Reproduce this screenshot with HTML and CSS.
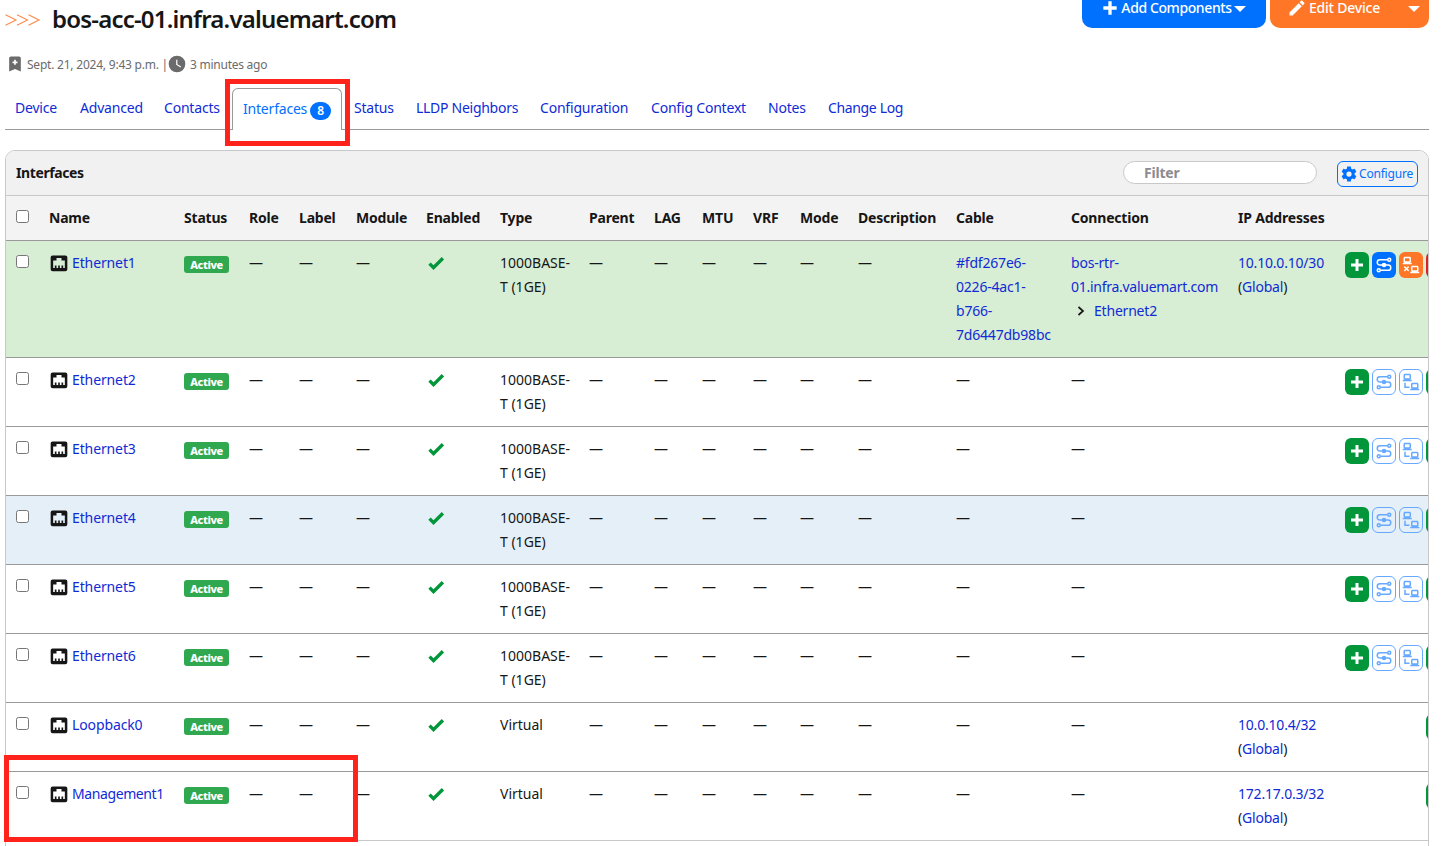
FILE: index.html
```html
<!DOCTYPE html>
<html lang="en">
<head>
<meta charset="utf-8">
<title>bos-acc-01.infra.valuemart.com - Interfaces</title>
<link rel="stylesheet" href="styles.css">
</head>
<body>
<svg class="sprite" aria-hidden="true">
<symbol id="ethernet" viewBox="0 0 24 24"><path d="M7,15H9V18H11V15H13V18H15V15H17V18H19V9H15V6H9V9H5V18H7V15M4.38,3H19.63C20.94,3 22,4.06 22,5.38V19.63A2.37,2.37 0 0,1 19.63,22H4.38C3.06,22 2,20.94 2,19.63V5.38C2,4.06 3.06,3 4.38,3Z"/></symbol>
<symbol id="check" viewBox="0 0 24 24"><path d="M9,20.42L2.79,14.21L5.62,11.38L9,14.77L18.88,4.88L21.71,7.71L9,20.42Z"/></symbol>
<symbol id="plus" viewBox="0 0 24 24"><path d="M20 14H14V20H10V14H4V10H10V4H14V10H20V14Z"/></symbol>
<symbol id="pencil" viewBox="0 0 24 24"><path d="M20.71,7.04C21.1,6.65 21.1,6 20.71,5.63L18.37,3.29C18,2.9 17.35,2.9 16.96,3.29L15.12,5.12L18.87,8.87M3,17.25V21H6.75L17.81,9.93L14.06,6.18L3,17.25Z"/></symbol>
<symbol id="clock" viewBox="0 0 24 24"><path d="M12,2A10,10 0 0,0 2,12A10,10 0 0,0 12,22A10,10 0 0,0 22,12A10,10 0 0,0 12,2M16.2,16.2L11,13V7H12.5V12.2L17,14.9L16.2,16.2Z"/></symbol>
<symbol id="bookmark" viewBox="0 0 24 24"><path d="M17,3A2,2 0 0,1 19,5V21L12,18L5,21V5C5,3.89 5.9,3 7,3H17M11,7V9H9V11H11V13H13V11H15V9H13V7H11Z"/></symbol>
<symbol id="cog" viewBox="0 0 24 24"><path d="M12,15.5A3.5,3.5 0 0,1 8.5,12A3.5,3.5 0 0,1 12,8.5A3.5,3.5 0 0,1 15.5,12A3.5,3.5 0 0,1 12,15.5M19.43,12.97C19.47,12.65 19.5,12.33 19.5,12C19.5,11.67 19.47,11.34 19.43,11L21.54,9.37C21.73,9.22 21.78,8.95 21.66,8.73L19.66,5.27C19.54,5.05 19.27,4.96 19.05,5.05L16.56,6.05C16.04,5.66 15.5,5.32 14.87,5.07L14.5,2.42C14.46,2.18 14.25,2 14,2H10C9.75,2 9.54,2.18 9.5,2.42L9.13,5.07C8.5,5.32 7.96,5.66 7.44,6.05L4.95,5.05C4.73,4.96 4.46,5.05 4.34,5.27L2.34,8.73C2.21,8.95 2.27,9.22 2.46,9.37L4.57,11C4.53,11.34 4.5,11.67 4.5,12C4.5,12.33 4.53,12.65 4.57,12.97L2.46,14.63C2.27,14.78 2.21,15.05 2.34,15.27L4.34,18.73C4.46,18.95 4.73,19.03 4.95,18.95L7.44,17.94C7.96,18.34 8.5,18.68 9.13,18.93L9.5,21.58C9.54,21.82 9.75,22 10,22H14C14.25,22 14.46,21.82 14.5,21.58L14.87,18.93C15.5,18.67 16.04,18.34 16.56,17.94L19.05,18.95C19.27,19.03 19.54,18.95 19.66,18.73L21.66,15.27C21.78,15.05 21.73,14.78 21.54,14.63L19.43,12.97Z"/></symbol>
<symbol id="transit" viewBox="0 0 24 24"><g fill="none" stroke="currentColor" stroke-width="2"><circle cx="19" cy="5" r="2"/><circle cx="5" cy="19" r="2"/><path d="M17 5H6.500A3.500 3.500 0 0 0 6.500 12H17.500A3.500 3.500 0 0 1 17.500 19H7"/></g><circle cx="12" cy="12" r="3"/></symbol>
<symbol id="lan" viewBox="0 0 24 24"><path d="M4,1C2.890,1 2,1.890 2,3V7C2,8.110 2.890,9 4,9H1V11H13V9H10C11.110,9 12,8.110 12,7V3C12,1.890 11.110,1 10,1H4M4,3H10V7H4V3M3,13V20H10V18H5V13H3M14,13C12.890,13 12,13.890 12,15V19C12,20.110 12.890,21 14,21H11V23H23V21H20C21.110,21 22,20.110 22,19V15C22,13.890 21.110,13 20,13H14M14,15H20V19H14V15Z"/></symbol>
<symbol id="lan-off" viewBox="0 0 24 24"><path d="M4,1C2.890,1 2,1.890 2,3V7C2,8.110 2.890,9 4,9H1V11H13V9H10C11.110,9 12,8.110 12,7V3C12,1.890 11.110,1 10,1H4M4,3H10V7H4V3M14,13C12.890,13 12,13.890 12,15V19C12,20.110 12.890,21 14,21H11V23H23V21H20C21.110,21 22,20.110 22,19V15C22,13.890 21.110,13 20,13H14M3.880,13.460L2.460,14.880L4.590,17L2.460,19.120L3.880,20.540L6,18.410L8.120,20.540L9.540,19.120L7.410,17L9.540,14.880L8.120,13.460L6,15.590L3.880,13.460M14,15H20V19H14V15Z"/></symbol>
</svg>
<main class="page">
<header class="page-header">
<svg class="chevrons" viewBox="0 0 36 12"><path d="M.5 .8L11 6L.5 11.200M12 .8L22.500 6L12 11.200M23.500 .8L34 6L23.500 11.200"/></svg>
<h1>bos-acc-01.infra.valuemart.com</h1>
<div class="header-actions">
<button class="btn-top add"><svg class="ic"><use href="#plus"/></svg><span>Add Components</span><i class="caret"></i></button>
<button class="btn-top edit"><svg class="ic"><use href="#pencil"/></svg><span>Edit Device</span><i class="caret"></i></button>
</div>
</header>
<div class="meta"><svg class="ic bm"><use href="#bookmark"/></svg><span class="when">Sept. 21, 2024, 9:43 p.m. |</span><svg class="ic ck"><use href="#clock"/></svg><span>3 minutes ago</span></div>
<nav class="tabs">
<a>Device</a><a>Advanced</a><a>Contacts</a><a class="active">Interfaces<span class="badge">8</span></a><a>Status</a><a>LLDP Neighbors</a><a>Configuration</a><a>Config Context</a><a>Notes</a><a>Change Log</a>
</nav>
<section class="panel">
<div class="panel-head"><strong>Interfaces</strong><input class="filter" placeholder="Filter"><button class="configure"><svg class="ic"><use href="#cog"/></svg><span>Configure</span></button></div>
<table>
<colgroup><col class="c-check"><col class="c-name"><col class="c-status"><col class="c-role"><col class="c-label"><col class="c-module"><col class="c-enabled"><col class="c-type"><col class="c-parent"><col class="c-lag"><col class="c-mtu"><col class="c-vrf"><col class="c-mode"><col class="c-desc"><col class="c-cable"><col class="c-conn"><col class="c-ip"><col class="c-act"></colgroup>
<thead><tr><th><input type="checkbox"></th><th>Name</th><th>Status</th><th>Role</th><th>Label</th><th>Module</th><th>Enabled</th><th>Type</th><th>Parent</th><th>LAG</th><th>MTU</th><th>VRF</th><th>Mode</th><th>Description</th><th>Cable</th><th>Connection</th><th>IP Addresses</th><th></th></tr></thead>
<tbody>
<tr class="connected"><td><input type="checkbox"></td><td><div class="name"><svg class="ic"><use href="#ethernet"/></svg><a>Ethernet1</a></div></td><td><span class="label">Active</span></td><td>—</td><td>—</td><td>—</td><td><svg class="ic yes"><use href="#check"/></svg></td><td class="type">1000BASE-<br>T (1GE)</td><td>—</td><td>—</td><td>—</td><td>—</td><td>—</td><td>—</td><td><a>#fdf267e6-<br>0226-4ac1-<br>b766-<br>7d6447db98bc</a></td><td><a>bos-rtr-<br><span class="host">01.infra.valuemart.com</span></a><br><svg class="arrow" viewBox="0 0 8 10"><path d="M1.500 1L6 5L1.500 9"/></svg><a>Ethernet2</a></td><td><a>10.10.0.10/30</a><br>(<a>Global</a>)</td><td><div class="acts"><b class="act green"><svg class="ic"><use href="#plus"/></svg></b><b class="act blue"><svg class="ic"><use href="#transit"/></svg></b><b class="act orange"><svg class="ic"><use href="#lan-off"/></svg></b><b class="act red"></b></div></td></tr>
<tr><td><input type="checkbox"></td><td><div class="name"><svg class="ic"><use href="#ethernet"/></svg><a>Ethernet2</a></div></td><td><span class="label">Active</span></td><td>—</td><td>—</td><td>—</td><td><svg class="ic yes"><use href="#check"/></svg></td><td class="type">1000BASE-<br>T (1GE)</td><td>—</td><td>—</td><td>—</td><td>—</td><td>—</td><td>—</td><td>—</td><td>—</td><td></td><td><div class="acts"><b class="act green"><svg class="ic"><use href="#plus"/></svg></b><b class="act off"><svg class="ic"><use href="#transit"/></svg></b><b class="act off"><svg class="ic"><use href="#lan"/></svg></b><b class="act green"></b></div></td></tr>
<tr><td><input type="checkbox"></td><td><div class="name"><svg class="ic"><use href="#ethernet"/></svg><a>Ethernet3</a></div></td><td><span class="label">Active</span></td><td>—</td><td>—</td><td>—</td><td><svg class="ic yes"><use href="#check"/></svg></td><td class="type">1000BASE-<br>T (1GE)</td><td>—</td><td>—</td><td>—</td><td>—</td><td>—</td><td>—</td><td>—</td><td>—</td><td></td><td><div class="acts"><b class="act green"><svg class="ic"><use href="#plus"/></svg></b><b class="act off"><svg class="ic"><use href="#transit"/></svg></b><b class="act off"><svg class="ic"><use href="#lan"/></svg></b><b class="act green"></b></div></td></tr>
<tr class="hovered"><td><input type="checkbox"></td><td><div class="name"><svg class="ic"><use href="#ethernet"/></svg><a>Ethernet4</a></div></td><td><span class="label">Active</span></td><td>—</td><td>—</td><td>—</td><td><svg class="ic yes"><use href="#check"/></svg></td><td class="type">1000BASE-<br>T (1GE)</td><td>—</td><td>—</td><td>—</td><td>—</td><td>—</td><td>—</td><td>—</td><td>—</td><td></td><td><div class="acts"><b class="act green"><svg class="ic"><use href="#plus"/></svg></b><b class="act off"><svg class="ic"><use href="#transit"/></svg></b><b class="act off"><svg class="ic"><use href="#lan"/></svg></b><b class="act green"></b></div></td></tr>
<tr><td><input type="checkbox"></td><td><div class="name"><svg class="ic"><use href="#ethernet"/></svg><a>Ethernet5</a></div></td><td><span class="label">Active</span></td><td>—</td><td>—</td><td>—</td><td><svg class="ic yes"><use href="#check"/></svg></td><td class="type">1000BASE-<br>T (1GE)</td><td>—</td><td>—</td><td>—</td><td>—</td><td>—</td><td>—</td><td>—</td><td>—</td><td></td><td><div class="acts"><b class="act green"><svg class="ic"><use href="#plus"/></svg></b><b class="act off"><svg class="ic"><use href="#transit"/></svg></b><b class="act off"><svg class="ic"><use href="#lan"/></svg></b><b class="act green"></b></div></td></tr>
<tr><td><input type="checkbox"></td><td><div class="name"><svg class="ic"><use href="#ethernet"/></svg><a>Ethernet6</a></div></td><td><span class="label">Active</span></td><td>—</td><td>—</td><td>—</td><td><svg class="ic yes"><use href="#check"/></svg></td><td class="type">1000BASE-<br>T (1GE)</td><td>—</td><td>—</td><td>—</td><td>—</td><td>—</td><td>—</td><td>—</td><td>—</td><td></td><td><div class="acts"><b class="act green"><svg class="ic"><use href="#plus"/></svg></b><b class="act off"><svg class="ic"><use href="#transit"/></svg></b><b class="act off"><svg class="ic"><use href="#lan"/></svg></b><b class="act green"></b></div></td></tr>
<tr><td><input type="checkbox"></td><td><div class="name"><svg class="ic"><use href="#ethernet"/></svg><a>Loopback0</a></div></td><td><span class="label">Active</span></td><td>—</td><td>—</td><td>—</td><td><svg class="ic yes"><use href="#check"/></svg></td><td class="type">Virtual</td><td>—</td><td>—</td><td>—</td><td>—</td><td>—</td><td>—</td><td>—</td><td>—</td><td><a>10.0.10.4/32</a><br>(<a>Global</a>)</td><td><div class="acts last"><b class="act green"></b></div></td></tr>
<tr><td><input type="checkbox"></td><td><div class="name"><svg class="ic"><use href="#ethernet"/></svg><a class="long">Management1</a></div></td><td><span class="label">Active</span></td><td>—</td><td>—</td><td>—</td><td><svg class="ic yes"><use href="#check"/></svg></td><td class="type">Virtual</td><td>—</td><td>—</td><td>—</td><td>—</td><td>—</td><td>—</td><td>—</td><td>—</td><td><a>172.17.0.3/32</a><br>(<a>Global</a>)</td><td><div class="acts last"><b class="act green"></b></div></td></tr>
</tbody>
</table>
</section>
</main>
<div class="mark mark-tab"></div>
<div class="mark mark-row"></div>
</body>
</html>
```
FILE: styles.css
```css
* { box-sizing: border-box; }
body { margin: 0; height: 846px; overflow: hidden; position: relative; background: #fff; color: #161616; font: 14px/24px "Noto Sans", "Open Sans", sans-serif; letter-spacing: -0.2px; }
button, input { font-family: inherit; letter-spacing: inherit; }
.sprite { position: absolute; width: 0; height: 0; }
.ic { display: block; flex: none; width: 20px; height: 20px; fill: currentColor; }
a { color: #0f2bd6; }
.page { width: 1424px; margin-left: 5px; }

.page-header { display: flex; align-items: flex-start; height: 54px; }
.chevrons { flex: none; width: 36px; height: 12px; margin-top: 14px; fill: none; stroke: #ff8a45; stroke-width: 1.1; }
h1 { margin: 3px 0 0 11px; font-size: 24px; line-height: 32px; font-weight: 600; letter-spacing: -0.79px; white-space: nowrap; }
.header-actions { display: flex; gap: 4px; margin-left: auto; }
.btn-top { display: flex; align-items: center; height: 28px; border: 0; border-radius: 0 0 10px 10px; padding: 0 0 12px; color: #fff; font-size: 14px; line-height: 16px; font-weight: 500; white-space: nowrap; }
.btn-top span { flex: none; }
.add { width: 184px; background: #0070ff; padding-left: 18px; letter-spacing: -0.4px; }
.add span { width: 111px; margin-left: 1px; }
.edit { width: 159px; background: #ff7626; padding-left: 17px; }
.edit span { width: 73px; margin-left: 1px; }
.edit .caret { margin-left: 27px; }
.caret { width: 0; height: 0; margin: 2px 0 0 2px; border: 6px solid transparent; border-top-color: #fff; border-bottom: 0; }

.meta { display: flex; align-items: center; height: 20px; padding-top: 2px; font-size: 12px; line-height: 20px; color: #6b6b6b; letter-spacing: -0.25px; white-space: nowrap; }
.meta .bm { margin-top: -3px; }
.when { width: 140px; margin-left: 2px; letter-spacing: -0.22px; }
.meta .ck { margin: -3px 3px 0 0; }

.tabs { display: flex; height: 56px; padding-top: 14px; border-bottom: 1px solid #9a9a9a; }
.tabs a { flex: none; height: 41px; padding: 8px 0 0 10px; line-height: 24px; white-space: nowrap; }
.tabs a:nth-child(1) { width: 65px; }
.tabs a:nth-child(2) { width: 84px; }
.tabs a:nth-child(3) { width: 78px; }
.tabs a:nth-child(5) { width: 62px; margin-left: 2px; }
.tabs a:nth-child(6) { width: 124px; letter-spacing: -0.28px; }
.tabs a:nth-child(7) { width: 111px; }
.tabs a:nth-child(8) { width: 117px; }
.tabs a:nth-child(9) { width: 60px; }
.tabs a:nth-child(10) { letter-spacing: -0.35px; }
.tabs a.active { display: flex; width: 110px; height: 42px; border: 1px solid #9a9a9a; border-bottom: 0; border-radius: 6px 6px 0 0; background: #fff; color: #0070ff; }
.badge { width: 21px; height: 18px; margin: 5px 0 0 3px; border-radius: 9px; background: #0070ff; color: #fff; font-size: 12px; line-height: 18px; font-weight: 600; text-align: center; }

.panel { height: 710px; margin-top: 20px; border: 1px solid #c8c8c8; border-radius: 10px 10px 0 0; overflow: hidden; }
.panel-head { display: flex; height: 45px; padding: 10px; background: #f1f1f1; border-bottom: 1px solid #c8c8c8; }
.panel-head strong { line-height: 24px; letter-spacing: -0.4px; }
.filter { width: 194px; height: 23px; margin: 0 0 0 auto; padding: 0 20px; border: 1px solid #c8c8c8; border-radius: 12px; background: #fff; font-size: 14px; font-weight: 700; }
.filter::placeholder { color: #8c8c90; opacity: 1; }
.configure { display: flex; align-items: center; width: 81px; height: 26px; margin: 0 0 0 20px; padding: 0 0 0 2px; border: 1px solid #0070ff; border-radius: 6px; background: transparent; color: #0070ff; font-size: 12px; }
.configure .ic { width: 18px; height: 18px; margin-right: 1px; }
.configure span { margin-top: -1px; }

table { width: 1520px; table-layout: fixed; border-spacing: 0; }
.c-check { width: 33px; } .c-name { width: 135px; } .c-status { width: 65px; }
.c-role { width: 50px; } .c-label { width: 57px; } .c-module { width: 70px; }
.c-enabled { width: 74px; } .c-type { width: 89px; } .c-parent { width: 65px; }
.c-lag { width: 48px; } .c-mtu { width: 51px; } .c-vrf { width: 47px; }
.c-mode { width: 58px; } .c-desc { width: 98px; } .c-cable { width: 115px; }
.c-conn { width: 167px; } .c-ip { width: 107px; } .c-act { width: 191px; }
th, td { padding: 10px 0 10px 10px; border-bottom: 1px solid #9a9a9a; text-align: left; vertical-align: top; white-space: nowrap; }
th { height: 45px; background: #f3f3f3; font-weight: 700; }
tbody td { height: 69px; }
tbody tr:last-child td { border-bottom-color: #c8c8c8; }
.connected { background: #d7edd4; }
.hovered { background: #e5eff8; }
input[type=checkbox] { display: block; width: 13px; height: 13px; margin: 4px 0 0; }
.name { display: flex; gap: 3px; letter-spacing: -0.12px; }
.long { letter-spacing: -0.4px; }
.name .ic { margin-top: 2px; }
.type { letter-spacing: 0; }
.host { letter-spacing: -0.27px; }
.label { display: block; width: 45px; height: 17px; margin-top: 5px; border-radius: 3px; background: #2fa84f; color: #fff; font-size: 11px; line-height: 17px; font-weight: 800; letter-spacing: -0.4px; text-align: center; }
.yes { margin-top: 2px; color: #009639; }
.arrow { width: 8px; height: 10px; margin: 0 9px 0 6px; fill: none; stroke: #161616; stroke-width: 1.7; }
.acts { display: flex; gap: 3px; margin-top: 1px; height: 26px; }
.acts.last { padding-left: 81px; }
.act { display: flex; flex: none; align-items: center; justify-content: center; width: 24px; height: 26px; border-radius: 6px; color: #fff; }
.act .ic { width: 18px; height: 18px; }
.green { background: #009639; }
.blue { background: #0070ff; }
.orange { background: #ff7626; }
.red { background: #e01f1f; }
.off { border: 1px solid #66a9ff; background: #fff; color: #66a9ff; }
.hovered .off { background: transparent; }

.mark { position: absolute; border: 5px solid #ff231b; }
.mark-tab { left: 225px; top: 79px; width: 125px; height: 67px; }
.mark-row { left: 4px; top: 755px; width: 354px; height: 87px; }
```
